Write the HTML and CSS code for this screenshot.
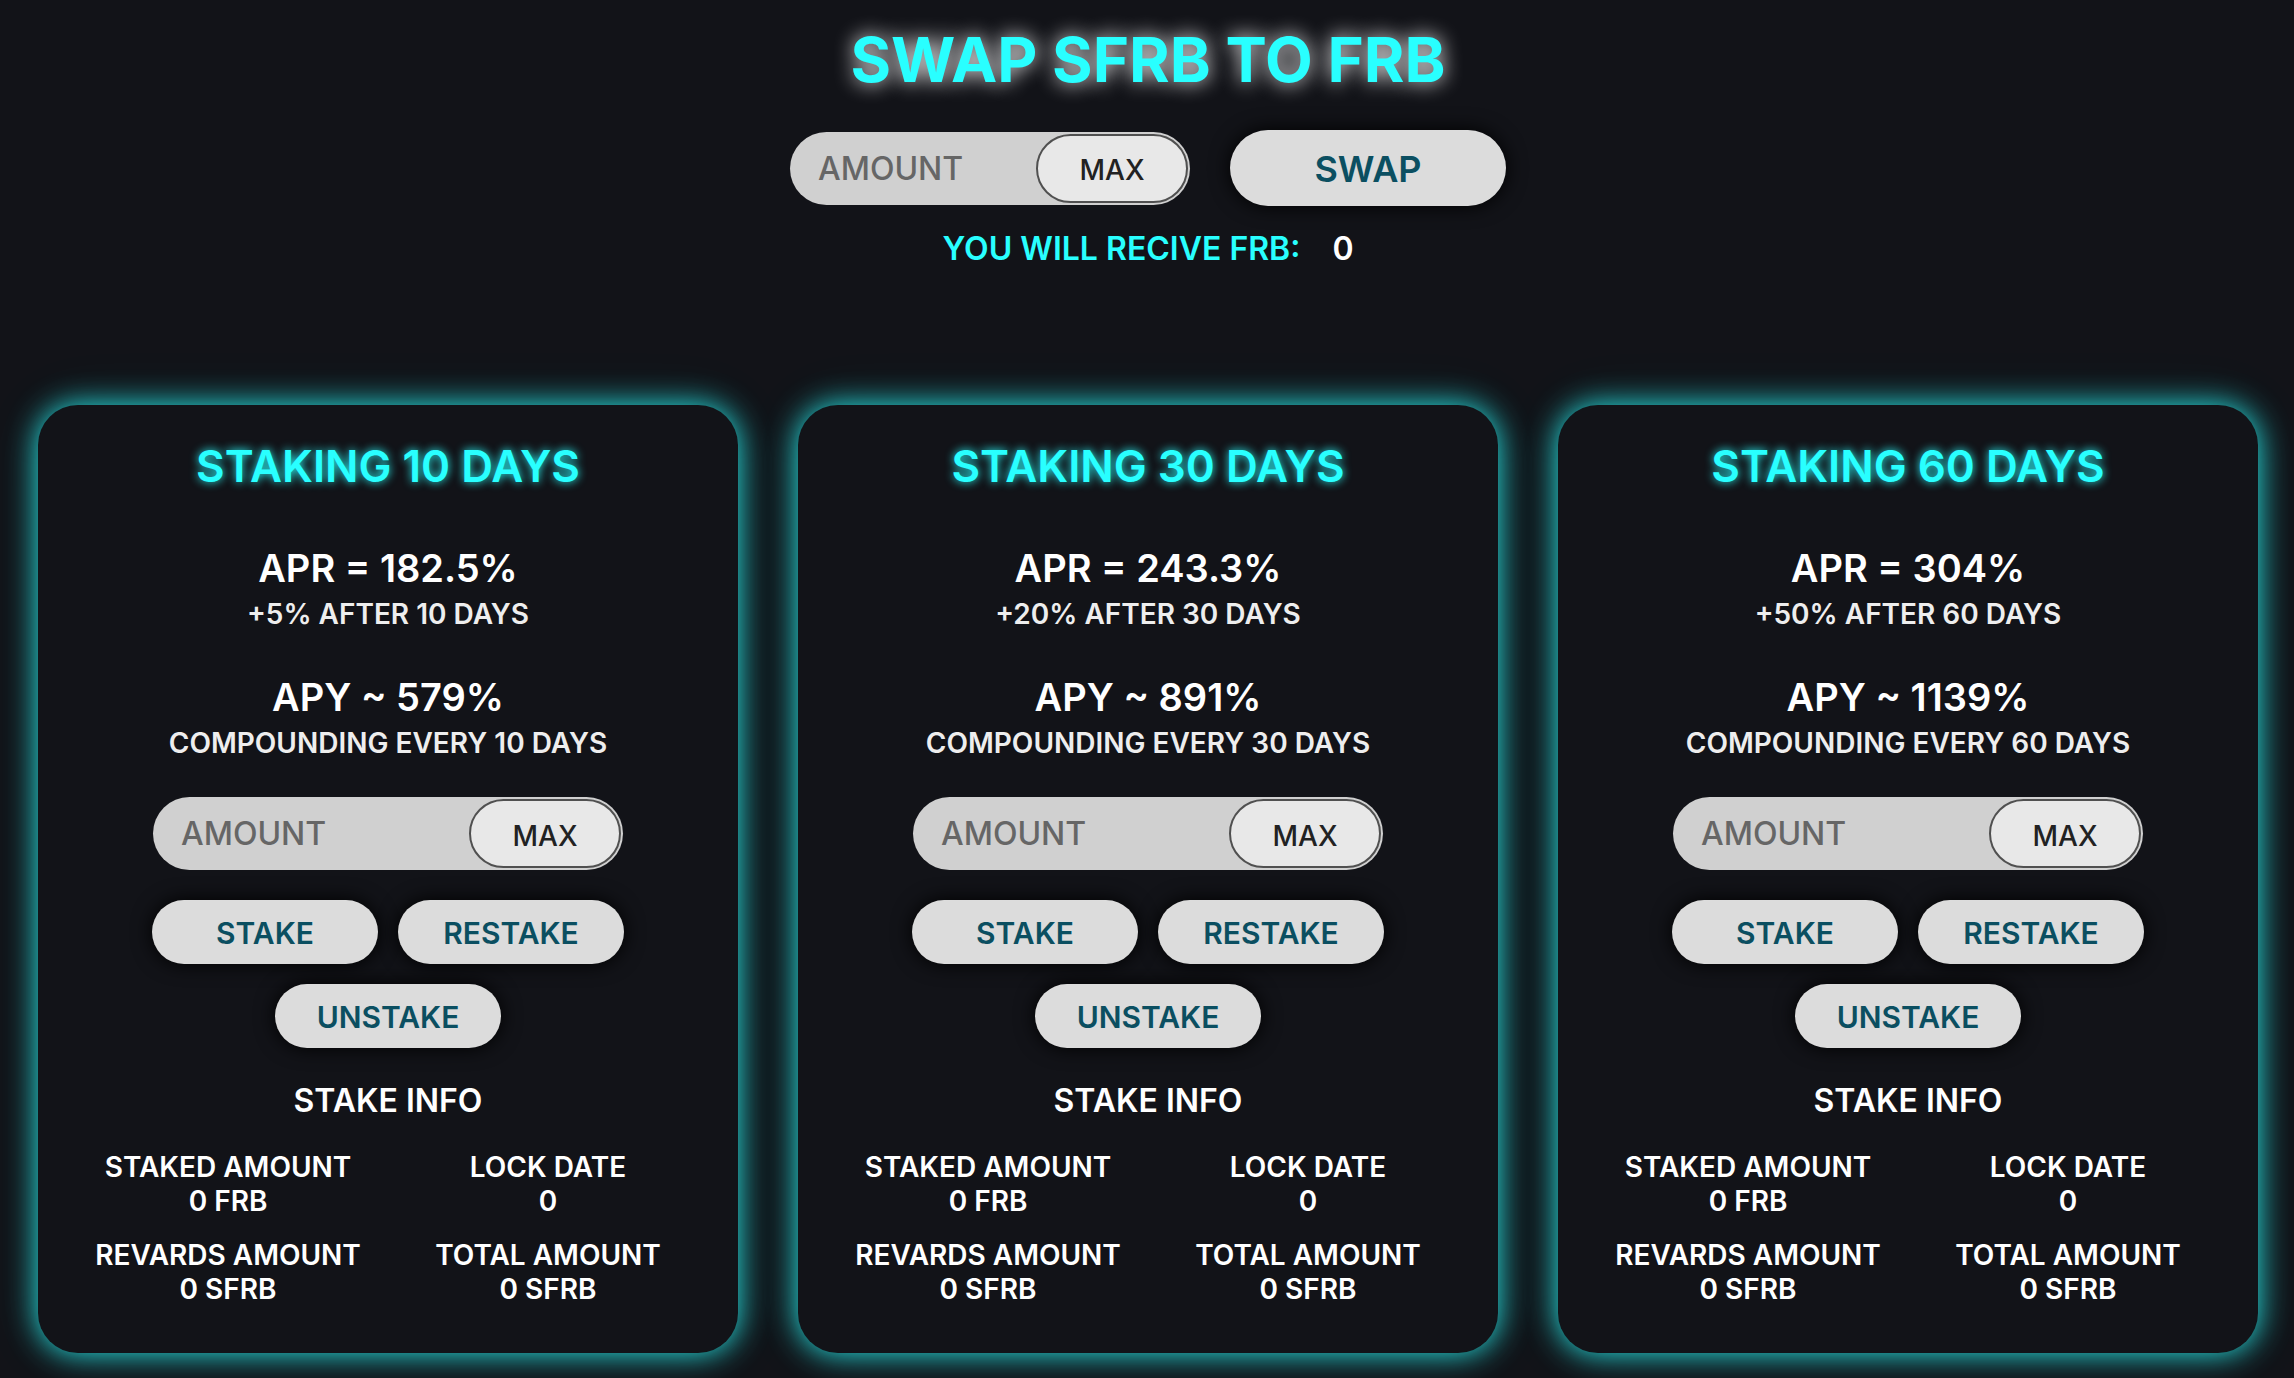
FILE: index.html
```html
<!DOCTYPE html>
<html lang="en">
<head>
<meta charset="utf-8">
<meta name="viewport" content="width=device-width, initial-scale=1">
<title>FRB Staking</title>
<link rel="stylesheet" href="styles.css">
</head>
<body>
<header class="swap">
  <h1 class="swap-title">SWAP SFRB TO FRB</h1>
  <form class="swap-form">
    <div class="field">
      <input class="field-input" type="text" placeholder="AMOUNT" aria-label="Amount to swap">
      <button class="field-max" type="button">MAX</button>
    </div>
    <button class="btn btn-large" type="button">SWAP</button>
  </form>
  <p class="receive"><span class="receive-label">YOU WILL RECIVE FRB:</span><span>0</span></p>
</header>
<main class="cards">
  <section class="card">
    <h2 class="card-title">STAKING 10 DAYS</h2>
    <p class="rate">APR = 182.5%</p>
    <p class="note">+5% AFTER 10 DAYS</p>
    <p class="rate rate-next">APY ~ 579%</p>
    <p class="note">COMPOUNDING EVERY 10 DAYS</p>
    <div class="field card-field">
      <input class="field-input" type="text" placeholder="AMOUNT" aria-label="Amount for 10 days">
      <button class="field-max" type="button">MAX</button>
    </div>
    <div class="actions">
      <button class="btn" type="button">STAKE</button>
      <button class="btn" type="button">RESTAKE</button>
      <button class="btn" type="button">UNSTAKE</button>
    </div>
    <h3 class="info-title">STAKE INFO</h3>
    <dl class="info">
      <div><dt>STAKED AMOUNT</dt><dd>0 FRB</dd></div>
      <div><dt>LOCK DATE</dt><dd>0</dd></div>
      <div><dt>REVARDS AMOUNT</dt><dd>0 SFRB</dd></div>
      <div><dt>TOTAL AMOUNT</dt><dd>0 SFRB</dd></div>
    </dl>
  </section>
  <section class="card">
    <h2 class="card-title">STAKING 30 DAYS</h2>
    <p class="rate">APR = 243.3%</p>
    <p class="note">+20% AFTER 30 DAYS</p>
    <p class="rate rate-next">APY ~ 891%</p>
    <p class="note">COMPOUNDING EVERY 30 DAYS</p>
    <div class="field card-field">
      <input class="field-input" type="text" placeholder="AMOUNT" aria-label="Amount for 30 days">
      <button class="field-max" type="button">MAX</button>
    </div>
    <div class="actions">
      <button class="btn" type="button">STAKE</button>
      <button class="btn" type="button">RESTAKE</button>
      <button class="btn" type="button">UNSTAKE</button>
    </div>
    <h3 class="info-title">STAKE INFO</h3>
    <dl class="info">
      <div><dt>STAKED AMOUNT</dt><dd>0 FRB</dd></div>
      <div><dt>LOCK DATE</dt><dd>0</dd></div>
      <div><dt>REVARDS AMOUNT</dt><dd>0 SFRB</dd></div>
      <div><dt>TOTAL AMOUNT</dt><dd>0 SFRB</dd></div>
    </dl>
  </section>
  <section class="card">
    <h2 class="card-title">STAKING 60 DAYS</h2>
    <p class="rate">APR = 304%</p>
    <p class="note">+50% AFTER 60 DAYS</p>
    <p class="rate rate-next">APY ~ 1139%</p>
    <p class="note">COMPOUNDING EVERY 60 DAYS</p>
    <div class="field card-field">
      <input class="field-input" type="text" placeholder="AMOUNT" aria-label="Amount for 60 days">
      <button class="field-max" type="button">MAX</button>
    </div>
    <div class="actions">
      <button class="btn" type="button">STAKE</button>
      <button class="btn" type="button">RESTAKE</button>
      <button class="btn" type="button">UNSTAKE</button>
    </div>
    <h3 class="info-title">STAKE INFO</h3>
    <dl class="info">
      <div><dt>STAKED AMOUNT</dt><dd>0 FRB</dd></div>
      <div><dt>LOCK DATE</dt><dd>0</dd></div>
      <div><dt>REVARDS AMOUNT</dt><dd>0 SFRB</dd></div>
      <div><dt>TOTAL AMOUNT</dt><dd>0 SFRB</dd></div>
    </dl>
  </section>
</main>
</body>
</html>
```
FILE: styles.css
```css
* {
  box-sizing: border-box;
}

body,
h1,
h2,
h3,
p,
dl,
dd {
  margin: 0;
}

body {
  background: #121318;
  color: #fff;
  font-family: Inter, "Noto Sans", sans-serif;
  font-weight: 600;
  text-align: center;
}

button,
input {
  font-family: inherit;
  font-weight: 600;
}

.swap {
  display: flex;
  flex-direction: column;
  align-items: center;
  padding: 24px 36px 0 38px;
}

.swap-title {
  color: #29ffff;
  font-size: 62px;
  font-weight: 700;
  line-height: 72px;
  text-shadow: 0 0 20px #fff;
}

.swap-form {
  display: flex;
  flex-wrap: wrap;
  justify-content: center;
  align-items: center;
  gap: 20px 40px;
  margin-top: 34px;
}

.field {
  display: flex;
  width: 400px;
  max-width: 100%;
  padding: 2px;
  border-radius: 40px;
  background: #d0d0d0;
}

.field-input {
  flex: 1;
  min-width: 0;
  padding: 0 0 0 26px;
  border: 0;
  background: transparent;
  color: #222;
  font-size: 32px;
  font-weight: 500;
}

.field-input::placeholder {
  color: #666;
  opacity: 1;
}

.field-max {
  width: 152px;
  height: 69px;
  padding: 4px 0 0;
  border: 2px solid #505050;
  border-radius: 35px;
  background: #e8e8e8;
  color: #222;
  font-size: 28px;
  font-weight: 500;
}

.btn {
  width: 226px;
  height: 64px;
  padding: 2px 0 0;
  border: 0;
  border-radius: 40px;
  background: #dcdcdc;
  box-shadow: 0 0 20px #000;
  color: #0b4f61;
  font-size: 30px;
}

.btn-large {
  width: 276px;
  height: 76px;
  font-size: 36px;
}

.receive {
  display: flex;
  gap: 32px;
  margin-top: 23px;
  font-size: 32px;
  line-height: 40px;
}

.receive-label {
  color: #29ffff;
}

.cards {
  display: grid;
  grid-template-columns: repeat(auto-fit, minmax(560px, 1fr));
  gap: 60px;
  margin-top: 136px;
  padding: 0 36px 25px 38px;
}

.card {
  display: flex;
  flex-direction: column;
  align-items: center;
  padding: 35px 30px 47px;
  border-radius: 40px;
  background: #121318;
  box-shadow: 0 0 30px rgba(41, 255, 255, 0.9), 0 0 60px rgba(41, 255, 255, 0.1);
}

.card-title {
  margin-bottom: 53px;
  color: #29ffff;
  font-size: 44px;
  font-weight: 600;
  line-height: 52px;
  text-shadow: 0 0 10px #29ffff;
}

.rate {
  font-size: 38px;
  line-height: 46px;
}

.rate-next {
  margin-top: 43px;
}

.note {
  margin-top: 6px;
  color: #eee;
  font-size: 28px;
  line-height: 34px;
}

.card-field {
  width: 470px;
  margin-top: 37px;
}

.actions {
  display: flex;
  flex-wrap: wrap;
  justify-content: center;
  gap: 20px;
  width: 472px;
  max-width: 100%;
  margin-top: 30px;
}

.info-title {
  margin-top: 34px;
  font-size: 32px;
  font-weight: 600;
  line-height: 38px;
}

.info {
  display: grid;
  grid-template-columns: 1fr 1fr;
  gap: 20px 0;
  align-self: stretch;
  margin-top: 30px;
  font-size: 28px;
  line-height: 34px;
}
```
